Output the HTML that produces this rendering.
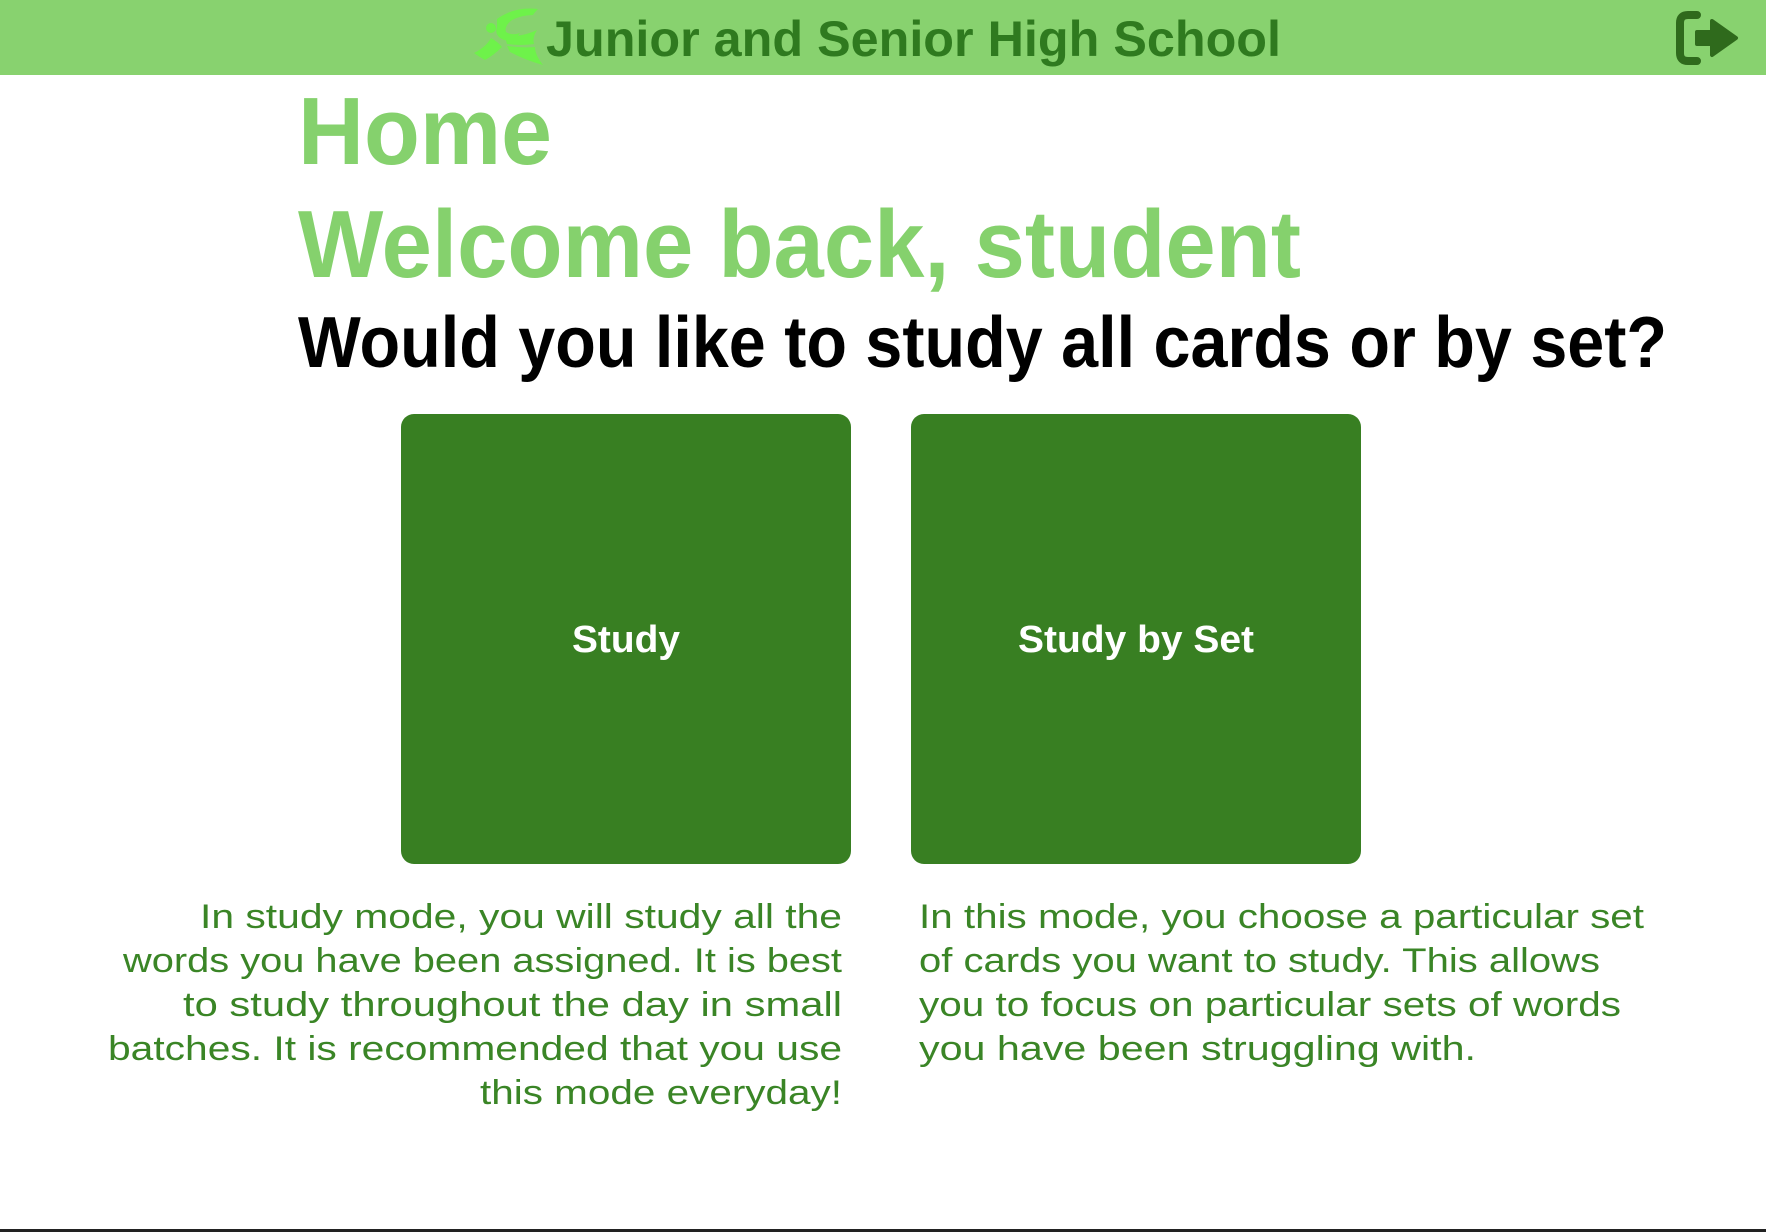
<!DOCTYPE html>
<html><head><meta charset="utf-8"><style>
html,body{margin:0;padding:0;background:#fff;width:1766px;height:1232px;overflow:hidden}
svg{display:block}
</style></head><body>
<svg width="1766" height="1232" viewBox="0 0 1766 1232" xmlns="http://www.w3.org/2000/svg" font-family="Liberation Sans, sans-serif">
<rect x="0" y="0" width="1766" height="75" fill="#88d26f"/>
<!-- logo -->
<g fill="#6ef24a">
<path d="M497 19 Q515 6 538 9 Q534 13 533 15 Q522 15 512 20 Q504 26 506 32 Q512 36 520 33 Q514 42 504 40 Q494 36 497 27 Q497 22 497 19Z"/>
<circle cx="491" cy="28" r="5"/>
<path d="M491 38 Q498 42 502 47 Q494 55 485 60 Q478 56 474 53 Q486 47 491 38Z"/>
<path d="M505 37 Q525 36 537 30 Q532 38 534 44 Q520 46 507 44Z"/>
<path d="M507 46 Q522 48 535 47 Q535 55 543 65 Q525 60 510 52Z"/>
</g>
<text x="546" y="56" font-size="50" font-weight="bold" fill="#2f7a1f" textLength="735" lengthAdjust="spacingAndGlyphs">Junior and Senior High School</text>
<!-- logout icon -->
<g fill="none" stroke="#2f6a1c" stroke-width="8" stroke-linecap="round" stroke-linejoin="round">
<path d="M1697 15 H1688 Q1680 15 1680 23 V53 Q1680 61 1688 61 H1697"/>
</g>
<path d="M1697 32 H1712 V21 L1736 38 L1712 55 V44 H1697 Z" fill="#2f6a1c" stroke="#2f6a1c" stroke-width="4" stroke-linejoin="round"/>
<text x="298" y="164" font-size="96" font-weight="bold" fill="#85d16d" textLength="254" lengthAdjust="spacingAndGlyphs">Home</text>
<text x="298" y="277" font-size="96" font-weight="bold" fill="#85d16d" textLength="1003" lengthAdjust="spacingAndGlyphs">Welcome back, student</text>
<text x="298" y="367" font-size="72" font-weight="bold" fill="#000" textLength="1369" lengthAdjust="spacingAndGlyphs">Would you like to study all cards or by set?</text>
<rect x="401" y="414" width="450" height="450" rx="13" fill="#387f22"/>
<rect x="911" y="414" width="450" height="450" rx="13" fill="#387f22"/>
<text x="572" y="652" font-size="38" font-weight="bold" fill="#fff" textLength="108" lengthAdjust="spacingAndGlyphs">Study</text>
<text x="1018" y="652" font-size="38" font-weight="bold" fill="#fff" textLength="236" lengthAdjust="spacingAndGlyphs">Study by Set</text>
<g font-size="34" fill="#3a8526">
<text x="200" y="928" textLength="642" lengthAdjust="spacingAndGlyphs">In study mode, you will study all the</text>
<text x="123" y="972" textLength="719" lengthAdjust="spacingAndGlyphs">words you have been assigned. It is best</text>
<text x="183" y="1016" textLength="659" lengthAdjust="spacingAndGlyphs">to study throughout the day in small</text>
<text x="108" y="1060" textLength="734" lengthAdjust="spacingAndGlyphs">batches. It is recommended that you use</text>
<text x="480" y="1104" textLength="362" lengthAdjust="spacingAndGlyphs">this mode everyday!</text>
<text x="919" y="928" textLength="725" lengthAdjust="spacingAndGlyphs">In this mode, you choose a particular set</text>
<text x="919" y="972" textLength="681" lengthAdjust="spacingAndGlyphs">of cards you want to study. This allows</text>
<text x="919" y="1016" textLength="702" lengthAdjust="spacingAndGlyphs">you to focus on particular sets of words</text>
<text x="919" y="1060" textLength="557" lengthAdjust="spacingAndGlyphs">you have been struggling with.</text>
</g>
<rect x="0" y="1229" width="1766" height="3" fill="#222"/>
</svg>
</body></html>
